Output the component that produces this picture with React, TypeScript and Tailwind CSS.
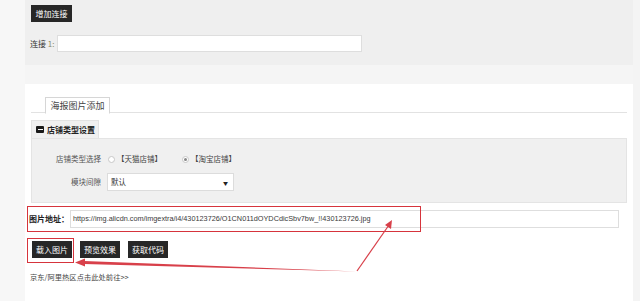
import React from "react";

const cjk = "[font-family:'Noto_Sans_CJK_SC','Microsoft_YaHei',sans-serif]";

function DarkButton({ label, w = "w-[40px]" }: { label: string; w?: string }) {
  return (
    <button
      className={`h-[17px] ${w} bg-[#272727] text-white text-[8px] leading-none flex items-center justify-center ${cjk}`}
    >
      {label}
    </button>
  );
}

function Radio({ checked }: { checked?: boolean }) {
  return (
    <span className="w-[7px] h-[7px] rounded-full border border-[#c8c8c8] bg-white flex items-center justify-center">
      {checked && <span className="w-[3px] h-[3px] rounded-full bg-[#888]" />}
    </span>
  );
}

export default function App() {
  return (
    <div className={`relative w-[640px] h-[301px] overflow-hidden flex bg-[#f7f7f7] text-[#333] ${cjk}`}>
      <div className="w-[25px] shrink-0 bg-[#f7f7f7]" />
      <div className="w-[608px] shrink-0 flex flex-col">
        {/* top panel */}
        <div className="h-[65px] bg-[#efefef] pl-[6px] pt-[5px] shrink-0">
          <DarkButton label="增加连接" w="w-[41px]" />
          <div className="mt-[13px] flex items-center h-[17px]">
            <span className="text-[8px] text-[#333] ml-[-1px] w-[27px]">
              连接 <span className="text-[#8a8a6a]">1:</span>
            </span>
            <div className="w-[305px] h-[17px] bg-white border border-[#dedede]" />
          </div>
        </div>
        <div className="h-[19px] bg-[#f5f5f5] shrink-0" />
        {/* white card */}
        <div className="flex-1 bg-white pt-[13px] px-[6px]">
          <div className="border-b border-[#e2e2e2] h-[16px] flex pl-[14px]">
            <div className="h-[17px] w-[65px] border border-[#d6d6d6] border-b-white bg-white text-[9px] text-[#444] flex items-center justify-center leading-none">
              海报图片添加
            </div>
          </div>
          {/* panel */}
          <div className="mt-[7px] w-[596px]">
            <div className="h-[18px] w-[68px] bg-[#f0f0f0] border border-[#e2e2e2] border-b-0 flex items-center pl-[4px] gap-[3px]">
              <span className="w-[8px] h-[7px] bg-[#1a1a1a] rounded-[1px] flex items-center justify-center">
                <span className="w-[5px] h-[1px] bg-white" />
              </span>
              <span className="text-[8px] font-bold text-[#222] leading-none">店铺类型设置</span>
            </div>
            <div className="h-[65px] bg-[#f0f0f0] border border-[#e4e4e4] pt-[13px] flex flex-col gap-[7px]">
              <div className="h-[14px] flex items-center">
                <span className="w-[69px] text-right text-[7.5px] text-[#555] leading-none">店铺类型选择</span>
                <span className="ml-[7px]"><Radio /></span>
                <span className="ml-[2px] text-[7.5px] text-[#444] leading-none">【天猫店铺】</span>
                <span className="ml-[20px]"><Radio checked /></span>
                <span className="ml-[2px] text-[7.5px] text-[#444] leading-none">【淘宝店铺】</span>
              </div>
              <div className="h-[18px] flex items-center">
                <span className="w-[69px] text-right text-[7.5px] text-[#555] leading-none">模块间隙</span>
                <div className="ml-[6px] w-[127px] h-[18px] bg-white border border-[#dcdcdc] flex items-center justify-between pl-[3px] pr-[5px]">
                  <span className="text-[7.5px] text-[#333] leading-none">默认</span>
                  <span className="text-[5px] text-[#222] leading-none">▼</span>
                </div>
              </div>
            </div>
          </div>
          {/* image url row */}
          <div className="mt-[7px] h-[18px] flex items-center">
            <span className="ml-[-2px] w-[41px] text-[8px] font-bold text-[#222] leading-none">图片地址：</span>
            <div className="w-[549px] h-[18px] bg-white border border-[#dedede] flex items-center pl-[2px]">
              <span className="[font-family:'Liberation_Sans',Arial,sans-serif] text-[7.3px] text-[#3a3a3a] whitespace-nowrap leading-none">
                https://img.alicdn.com/imgextra/i4/430123726/O1CN011dOYDCdicSbv7bw_!!430123726.jpg
              </span>
            </div>
          </div>
          {/* buttons */}
          <div className="mt-[13px] flex gap-[8px] pl-[1px]">
            <DarkButton label="载入图片" />
            <DarkButton label="预览效果" />
            <DarkButton label="获取代码" />
          </div>
          <div className="mt-[16px] text-[7.3px] text-[#444] leading-none ml-[-1px]">京东/阿里热区点击此处前往&gt;&gt;</div>
        </div>
      </div>
      <div className="flex-1 bg-[#f4f4f4]" />

      {/* red annotations */}
      <div className="absolute left-[27px] top-[206px] w-[394px] h-[26px] border-[1.5px] border-[#d6343c]" />
      <div className="absolute left-[27px] top-[238px] w-[47px] h-[25px] border-[1.5px] border-[#d6343c]" />
      <svg className="absolute left-0 top-0" width="640" height="301" viewBox="0 0 640 301">
        <line x1="357" y1="271" x2="389" y2="225" stroke="#d8404a" strokeWidth="1.2" />
        <polygon points="392,220 391,229 385,225" fill="#d8404a" />
        <polygon points="357,271.5 84,261 84,264" fill="#d8404a" />
        <polygon points="75,262.5 85,258.5 85,266.5" fill="#d8404a" />
      </svg>
    </div>
  );
}
